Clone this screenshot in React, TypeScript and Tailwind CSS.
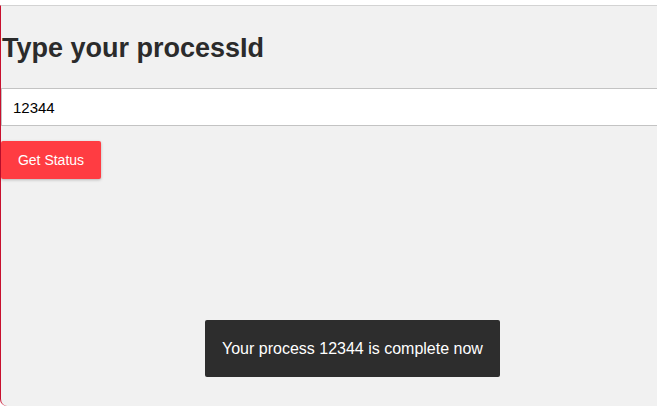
export default function App() {
  return (
    <div className="h-[406px] w-[657px] overflow-hidden bg-white font-['Liberation_Sans',Arial,sans-serif]">
      <div className="mt-[5px] flex h-[401px] flex-col rounded-bl-[7px] border-t border-l border-t-[#d3d3d3] border-l-[#c8102e] bg-[#f1f1f1]">
        <h1 className="mt-[26px] ml-[1px] text-[27px] leading-[32px] font-bold text-[#2b2b2b]">
          Type your processId
        </h1>
        <input
          readOnly
          value="12344"
          className="mt-[24px] h-[38px] w-[680px] border border-[#c3c3c3] bg-white px-[11px] text-[15px] text-black outline-none"
        />
        <button className="mt-[15px] h-[38px] w-[100px] rounded-[2px] bg-[#ff3c42] text-[14px] text-white shadow-[0_1px_3px_rgba(0,0,0,0.25)]">
          Get Status
        </button>
        <div className="mt-[141px] flex pl-[204px]">
          <div className="flex h-[57px] items-center rounded-[2px] bg-[#2d2d2d] px-[17px] text-[16px] text-white">
            Your process 12344 is complete now
          </div>
        </div>
      </div>
    </div>
  );
}
